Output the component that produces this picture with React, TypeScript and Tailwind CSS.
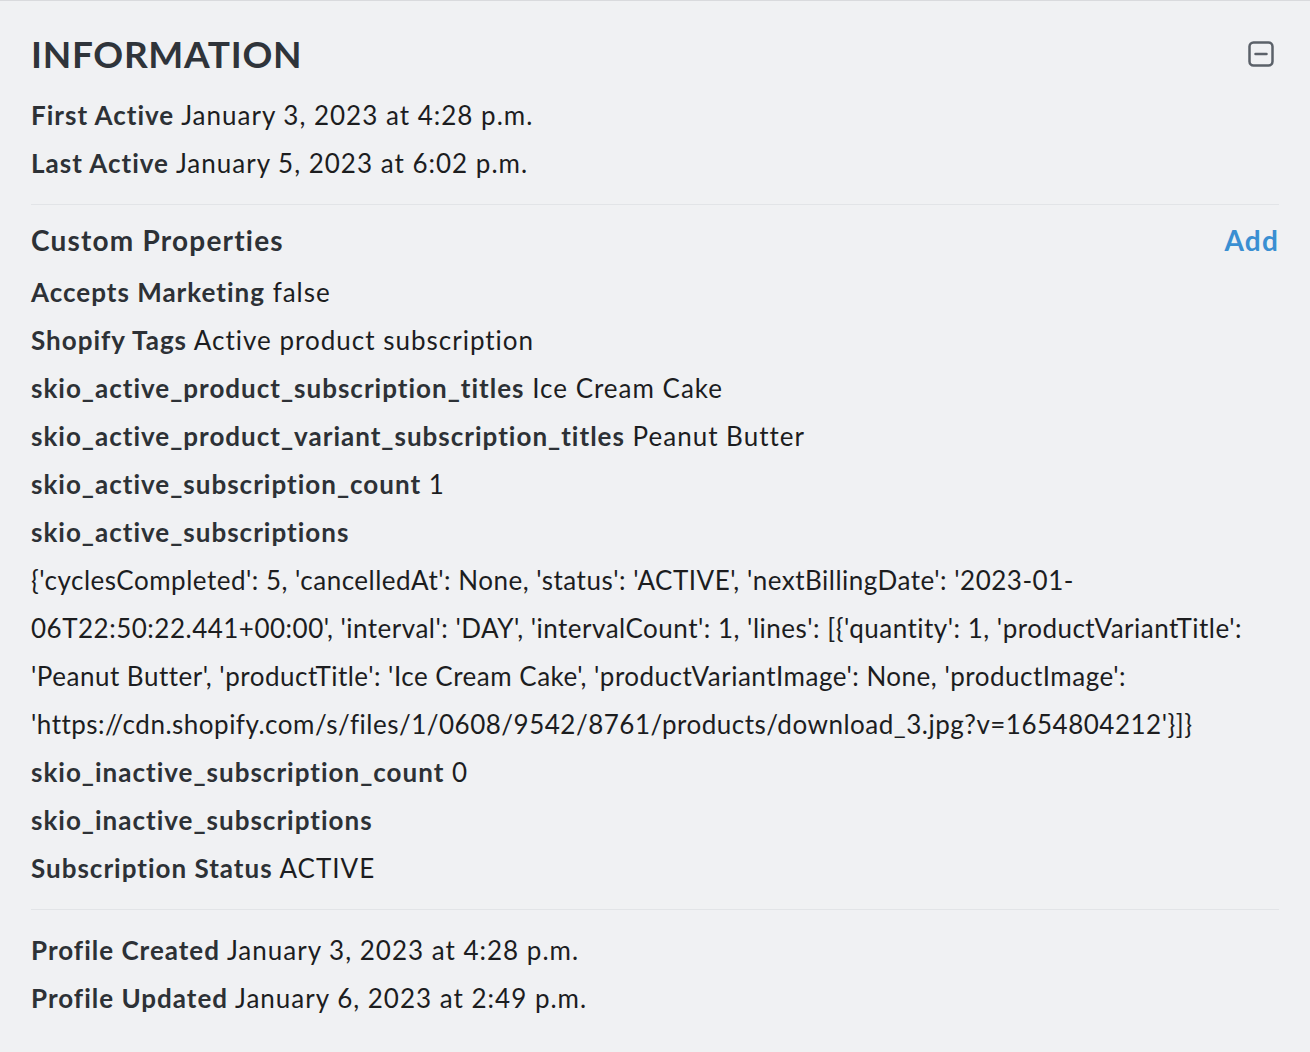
import React from 'react';

const props: { label: string; value?: string }[] = [
  { label: 'Accepts Marketing', value: 'false' },
  { label: 'Shopify Tags', value: 'Active product subscription' },
  { label: 'skio_active_product_subscription_titles', value: 'Ice Cream Cake' },
  { label: 'skio_active_product_variant_subscription_titles', value: 'Peanut Butter' },
  { label: 'skio_active_subscription_count', value: '1' },
];

const props2: { label: string; value?: string }[] = [
  { label: 'skio_inactive_subscription_count', value: '0' },
  { label: 'skio_inactive_subscriptions' },
  { label: 'Subscription Status', value: 'ACTIVE' },
];

const activeSubs =
  "{'cyclesCompleted': 5, 'cancelledAt': None, 'status': 'ACTIVE', 'nextBillingDate': '2023-01-06T22:50:22.441+00:00', 'interval': 'DAY', 'intervalCount': 1, 'lines': [{'quantity': 1, 'productVariantTitle': 'Peanut Butter', 'productTitle': 'Ice Cream Cake', 'productVariantImage': None, 'productImage': 'https://cdn.shopify.com/s/files/1/0608/9542/8761/products/download_3.jpg?v=1654804212'}]}";

function Row({ label, value }: { label: string; value?: string }) {
  return (
    <div className="leading-[48px] text-[26px] tracking-[1px] whitespace-nowrap">
      <span className="font-bold text-[#2d3136]">{label}</span>
      {value !== undefined && <span className="text-[#1c1d1f]"> {value}</span>}
    </div>
  );
}

function MinusBox() {
  return (
    <svg width="28" height="28" viewBox="0 0 28 28" fill="none" className="text-[#5b6169]">
      <rect x="2.5" y="2.5" width="23" height="23" rx="4" stroke="currentColor" strokeWidth="2.5" />
      <path d="M8.5 14h11" stroke="currentColor" strokeWidth="2.5" strokeLinecap="round" />
    </svg>
  );
}

export default function App() {
  return (
    <div
      className="min-h-screen bg-[#f0f1f3] border-t border-[#d9dadd] px-[31px] pt-[31px] pb-[30px]"
      style={{ fontFamily: 'Lato, "Noto Sans", sans-serif' }}
    >
      {/* Header */}
      <div className="flex items-center justify-between h-[44px]">
        <h1 className="text-[37px] font-bold tracking-[0.7px] text-[#2f343a] leading-[44px]">INFORMATION</h1>
        <button className="mr-[4px]"><MinusBox /></button>
      </div>

      <div className="mt-[15px]">
        <Row label="First Active" value="January 3, 2023 at 4:28 p.m." />
        <Row label="Last Active" value="January 5, 2023 at 6:02 p.m." />
      </div>

      <div className="mt-[17px] border-t border-[#e2e4e7]" />

      {/* Custom Properties */}
      <div className="mt-[11px] flex items-center justify-between h-[48px]">
        <h2 className="text-[28px] font-bold tracking-[1.2px] text-[#2d3136]">Custom Properties</h2>
        <a className="text-[28px] font-bold tracking-[1.2px] text-[#3a8fd2] cursor-pointer">Add</a>
      </div>

      <div className="mt-[4px]">
        {props.map(p => <Row key={p.label} {...p} />)}
        <Row label="skio_active_subscriptions" />
        <p className="leading-[48px] text-[26px] tracking-[0.5px] text-[#1c1d1f] break-words">{activeSubs}</p>
        {props2.map(p => <Row key={p.label} {...p} />)}
      </div>

      <div className="mt-[17px] border-t border-[#e2e4e7]" />

      <div className="mt-[16px]">
        <Row label="Profile Created" value="January 3, 2023 at 4:28 p.m." />
        <Row label="Profile Updated" value="January 6, 2023 at 2:49 p.m." />
      </div>
    </div>
  );
}
